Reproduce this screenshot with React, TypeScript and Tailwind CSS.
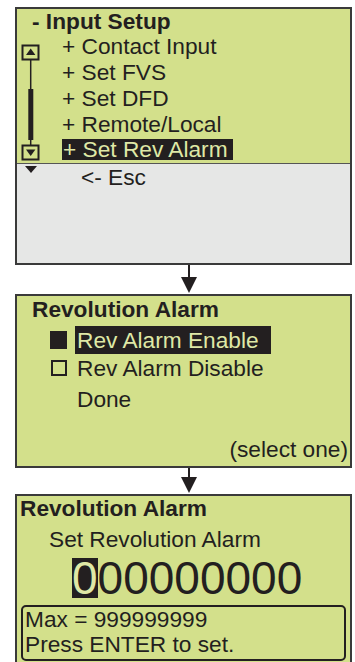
const GREEN = 'bg-[#d3e08b]';

function Arrow({ h }: { h: number }) {
  return (
    <div className="flex w-[337px] justify-center pl-[10px]">
      <svg width="20" height={h} viewBox={`0 0 20 ${h}`} aria-hidden="true">
        <line x1="10" y1="0" x2="10" y2={h - 14} stroke="#231f20" strokeWidth="2" />
        <polygon points={`2,${h - 17} 18,${h - 17} 10,${h - 1}`} fill="#231f20" />
      </svg>
    </div>
  );
}

function ScrollBar() {
  return (
    <svg width="45" height="130" viewBox="0 0 45 130" aria-hidden="true" className="shrink-0">
      <rect x="5.5" y="12.5" width="16" height="14" fill="none" stroke="#231f20" strokeWidth="2" />
      <polygon points="13.7,15.5 9,22 18.4,22" fill="#231f20" />
      <line x1="13.7" y1="27" x2="13.7" y2="112" stroke="#231f20" strokeWidth="1.5" />
      <rect x="11.3" y="56" width="5" height="51" fill="#231f20" />
      <rect x="5.5" y="112.5" width="16" height="14" fill="none" stroke="#231f20" strokeWidth="2" />
      <polygon points="9,116.5 18.4,116.5 13.7,123" fill="#231f20" />
    </svg>
  );
}

export default function App() {
  const items = ['+ Contact Input', '+ Set FVS', '+ Set DFD', '+ Remote/Local'];
  return (
    <div className="min-h-[662px] w-[355px] bg-white pt-[7px] pl-[15px] text-[22.7px] text-[#231f20] font-['Liberation_Sans',Arial,sans-serif]">
      {/* input setup menu */}
      <div className="w-[337px] border-2 border-[#3a3a3a]">
        <div className={GREEN}>
          <div className="flex h-[24px] items-start">
            <span className="ml-[15px] font-bold leading-[24px]">- Input Setup</span>
          </div>
          <div className="flex">
            <ScrollBar />
            <div className="flex flex-col">
              {items.map((t) => (
                <div key={t} className="h-[26px] leading-[26px]">
                  {t}
                </div>
              ))}
              <div className="flex h-[26px] items-start">
                <span className="mt-[2px] h-[21px] bg-[#231f20] pr-[5px] pl-[1px] leading-[21px] text-[#dfe8a6]">
                  + Set Rev Alarm
                </span>
              </div>
            </div>
          </div>
        </div>
        <div className="flex h-[100px] items-start border-t border-[#555] bg-[#e6e7e6]">
          <svg width="12" height="7" viewBox="0 0 12 7" aria-hidden="true" className="mt-[2px] ml-[8px] shrink-0">
            <polygon points="0,0 12,0 6,7" fill="#231f20" />
          </svg>
          <span className="ml-[44px] leading-[26px]">&lt;- Esc</span>
        </div>
      </div>

      <Arrow h={29} />

      {/* revolution alarm select */}
      <div className={`flex h-[174px] w-[337px] flex-col border-2 border-[#3a3a3a] ${GREEN}`}>
        <div className="mt-[1px] pl-[15px] font-bold leading-[24px]">Revolution Alarm</div>
        <div className="mt-[5px] flex h-[28px] items-center pl-[33px]">
          <span className="h-[18px] w-[17px] bg-[#231f20]" />
          <span className="ml-[8px] h-[28px] w-[196px] bg-[#231f20] pl-[2px] leading-[28px] text-[#dfe8a6]">
            Rev Alarm Enable
          </span>
        </div>
        <div className="flex h-[28px] items-center pl-[34px]">
          <span className="h-[16px] w-[16px] border-2 border-[#231f20]" />
          <span className="ml-[8px] pl-[2px] leading-[28px]">Rev Alarm Disable</span>
        </div>
        <div className="mt-[3px] h-[28px] pl-[60px] leading-[28px]">Done</div>
        <div className="mt-auto pr-[2px] pb-[4px] text-right leading-[26px]">(select one)</div>
      </div>

      <Arrow h={26} />

      {/* revolution alarm value */}
      <div className={`h-[175px] w-[337px] border-2 border-[#3a3a3a] ${GREEN}`}>
        <div className="pl-[3px] font-bold leading-[24px]">Revolution Alarm</div>
        <div className="mt-[6px] pl-[32px] leading-[26px]">Set Revolution Alarm</div>
        <div className="mt-[6px] flex h-[40px] pl-[55px] text-[46px] leading-[40px]">
          <span className="bg-[#231f20] text-[#dfe8a6]">0</span>
          <span>00000000</span>
        </div>
        <div className="mx-[4px] mt-[7px] rounded-[5px] border-2 border-[#231f20] pb-[2px] pl-[2px] leading-[25px]">
          <div>Max = 999999999</div>
          <div>Press ENTER to set.</div>
        </div>
      </div>
    </div>
  );
}
